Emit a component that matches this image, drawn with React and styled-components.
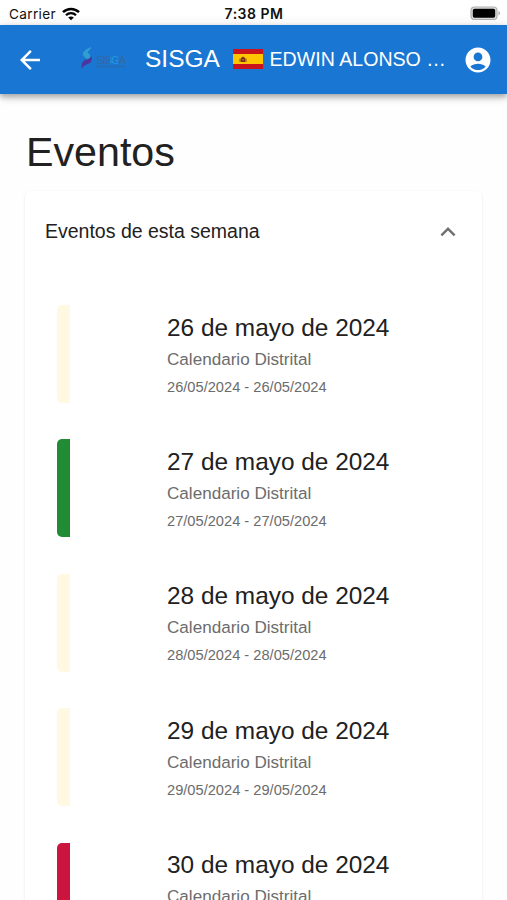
import React, { useState } from 'react';
import styled, { createGlobalStyle } from 'styled-components';

const GlobalStyle = createGlobalStyle`
  * {
    box-sizing: border-box;
  }

  body {
    margin: 0;
    background: #fefefe;
    color: #212121;
    font-family: "Liberation Sans", Arial, sans-serif;
  }
`;

const Screen = styled.div`
  height: 900px;
  overflow: hidden;
`;

const StatusBar = styled.div`
  display: grid;
  grid-template-columns: 1fr auto 1fr;
  align-items: center;
  height: 25px;
  padding: 2px 6px 0 9px;
  background: #fff;
  color: #111;
  font-family: Inter, sans-serif;
  font-size: 13.6px;
  line-height: 22px;
`;

const Carrier = styled.div`
  display: flex;
  align-items: center;
  gap: 5.5px;
  letter-spacing: 0.35px;
`;

const Clock = styled.div`
  margin-left: -2px;
  font-size: 14px;
  font-weight: 600;
  letter-spacing: 0.5px;
`;

const BatteryIcon = styled.svg`
  justify-self: end;
  margin-top: -1px;
`;

const AppBar = styled.header`
  position: relative;
  display: flex;
  align-items: center;
  height: 69px;
  padding: 0 14px 0 15px;
  background: #1976d2;
  color: #fff;
  box-shadow: 0 2px 5px rgba(0, 0, 0, 0.22), 0 5px 6px rgba(0, 0, 0, 0.12),
    0 1px 12px rgba(0, 0, 0, 0.1);
`;

const IconButton = styled.button`
  display: flex;
  flex-shrink: 0;
  padding: 0;
  border: none;
  background: none;
  color: ${props => props.color || 'inherit'};
  cursor: pointer;
`;

const Logo = styled.svg`
  flex-shrink: 0;
  margin-left: 36px;
  margin-bottom: 4px;
`;

const Brand = styled.div`
  width: 75px;
  margin-left: 18px;
  padding-bottom: 1px;
  font-size: 24.5px;
  line-height: 38px;
`;

const Flag = styled.svg`
  flex-shrink: 0;
  margin-left: 13px;
  margin-bottom: 1px;
`;

const UserName = styled.div`
  flex: 1;
  min-width: 0;
  margin-left: 6.5px;
  padding-bottom: 1px;
  overflow: hidden;
  font-size: 19.6px;
  line-height: 30px;
  text-overflow: ellipsis;
  white-space: nowrap;
`;

const Content = styled.main`
  padding: 33px 25px 0;
`;

const Title = styled.h1`
  margin: 0 0 13px 1px;
  font-size: 41.2px;
  font-weight: 400;
  line-height: 51px;
`;

const Panel = styled.section`
  border-radius: 5px;
  background: #fff;
  box-shadow: 0 1px 3px rgba(0, 0, 0, 0.09);
`;

const PanelHeader = styled.div`
  display: flex;
  align-items: center;
  justify-content: space-between;
  height: 81px;
  padding: 0 19px 0 20px;
  font-size: 19.5px;
`;

const EventList = styled.div`
  display: flex;
  flex-direction: column;
  gap: 36.4px;
  padding: 33px 32px;
`;

const EventCard = styled.article`
  display: flex;
  height: 98px;
`;

const EventColor = styled.div`
  width: 12.5px;
  margin-right: 97.5px;
  border-radius: 5px 0 0 5px;
  background: ${props => props.color};
`;

const EventText = styled.div`
  padding-top: 5.7px;
`;

const EventTitle = styled.h2`
  margin: 0;
  font-size: 24.4px;
  font-weight: 400;
  line-height: 34px;
`;

const EventCalendar = styled.div`
  color: #6c6c6c;
  font-size: 17.1px;
  line-height: 30px;
`;

const EventDates = styled.div`
  color: #6c6c6c;
  font-size: 14.65px;
  line-height: 25px;
`;

const events = [
  { day: 26, color: '#fff8e3' },
  { day: 27, color: '#228b35' },
  { day: 28, color: '#fff8e3' },
  { day: 29, color: '#fff8e3' },
  { day: 30, color: '#cb1440' },
];

function SisgaLogo() {
  return (
    <Logo width="46" height="26" viewBox="0 0 46 26">
      <defs>
        <linearGradient id="logoText">
          <stop offset="0.44" stopColor="#35689c" />
          <stop offset="0.48" stopColor="#2599dc" />
          <stop offset="0.7" stopColor="#2599dc" />
          <stop offset="0.75" stopColor="#35689c" />
        </linearGradient>
      </defs>
      <path d="M10 2C5 4 1 7 2 10c1 3 4 3 5 5 3-3 3-5 0-7-1-2 3-3 3-6z" fill="#2f9fd0" />
      <path d="M10 11c2 4 0 7-3 8-3 1-5 2-6 5-1-5 0-7 3-9 3-1 5-1 6-4z" fill="#4c359c" />
      <text x="15" y="18.5" fontSize="11" textLength="30" fill="url(#logoText)" fontFamily="Liberation Sans">SISGA</text>
      <path d="M15 21.5h30" stroke="#2b6bae" strokeWidth="2" strokeDasharray="2 0.7" />
    </Logo>
  );
}

function SpanishFlag() {
  return (
    <Flag width="30" height="20" viewBox="0 0 30 20">
      <path d="M0 0h30v20H0z" fill="#c9141e" />
      <path d="M0 5h30v10H0z" fill="#ffc400" />
      <path d="M6.5 9.5h1.2V13H6.5zM12.3 9.5h1.2V13h-1.2z" fill="#8f5016" />
      <path d="M8 9l2-1.5L12 9v4H8z" fill="#7a3214" />
      <path d="M9.5 10h1v1.5h-1z" fill="#c78a42" />
    </Flag>
  );
}

function App() {
  const [open, setOpen] = useState(true);

  return (
    <Screen>
      <GlobalStyle />
      <StatusBar>
        <Carrier>
          Carrier
          <svg width="18" height="14" viewBox="0 0 18 14">
            <path d="M1 5.2C5.5.8 12.5.8 17 5.2" fill="none" stroke="#000" strokeWidth="2.5" />
            <path d="M4 8.3c2.8-2.8 7.2-2.8 10 0" fill="none" stroke="#000" strokeWidth="2.3" />
            <path d="M6.2 10.5c1.6-1.5 4-1.5 5.6 0L9 13.3z" fill="#000" />
          </svg>
        </Carrier>
        <Clock>7:38 PM</Clock>
        <BatteryIcon width="31" height="15" viewBox="0 0 31 15">
          <rect x="1" y="1" width="26" height="12.5" rx="3.5" fill="#ddd" stroke="#b0b0b0" strokeWidth="1.2" />
          <rect x="2.8" y="2.8" width="22.4" height="8.9" rx="1.8" fill="#000" />
          <path d="M28.5 5c2 .8 2 3.7 0 4.5z" fill="#aaa" />
        </BatteryIcon>
      </StatusBar>

      <AppBar>
        <IconButton aria-label="Volver">
          <svg width="30" height="30" viewBox="0 0 24 24" fill="currentColor">
            <path d="M20 11H7.83l5.59-5.59L12 4l-8 8 8 8 1.41-1.41L7.83 13H20v-2z" />
          </svg>
        </IconButton>
        <SisgaLogo />
        <Brand>SISGA</Brand>
        <SpanishFlag />
        <UserName>EDWIN ALONSO …</UserName>
        <IconButton aria-label="Cuenta">
          <svg width="30" height="30" viewBox="0 0 24 24" fill="currentColor">
            <path d="M12 2C6.48 2 2 6.48 2 12s4.48 10 10 10 10-4.48 10-10S17.52 2 12 2zm0 4c1.93 0 3.5 1.57 3.5 3.5S13.93 13 12 13s-3.5-1.57-3.5-3.5S10.07 6 12 6zm0 14c-2.03 0-4.43-.82-6.14-2.88C7.55 15.8 9.68 15 12 15s4.45.8 6.14 2.12C16.43 19.18 14.03 20 12 20z" />
          </svg>
        </IconButton>
      </AppBar>

      <Content>
        <Title>Eventos</Title>
        <Panel>
          <PanelHeader>
            Eventos de esta semana
            <IconButton color="#707070" aria-label="Mostrar" onClick={() => setOpen(!open)}>
              <svg width="30" height="30" viewBox="0 0 24 24" fill="currentColor">
                <path d="M12 8l-6 6 1.41 1.41L12 10.83l4.59 4.58L18 14z" />
              </svg>
            </IconButton>
          </PanelHeader>
          {open && (
            <EventList>
              {events.map((event) => (
                <EventCard key={event.day}>
                  <EventColor color={event.color} />
                  <EventText>
                    <EventTitle>{event.day} de mayo de 2024</EventTitle>
                    <EventCalendar>Calendario Distrital</EventCalendar>
                    <EventDates>
                      {event.day}/05/2024 - {event.day}/05/2024
                    </EventDates>
                  </EventText>
                </EventCard>
              ))}
            </EventList>
          )}
        </Panel>
      </Content>
    </Screen>
  );
}

export default App;
